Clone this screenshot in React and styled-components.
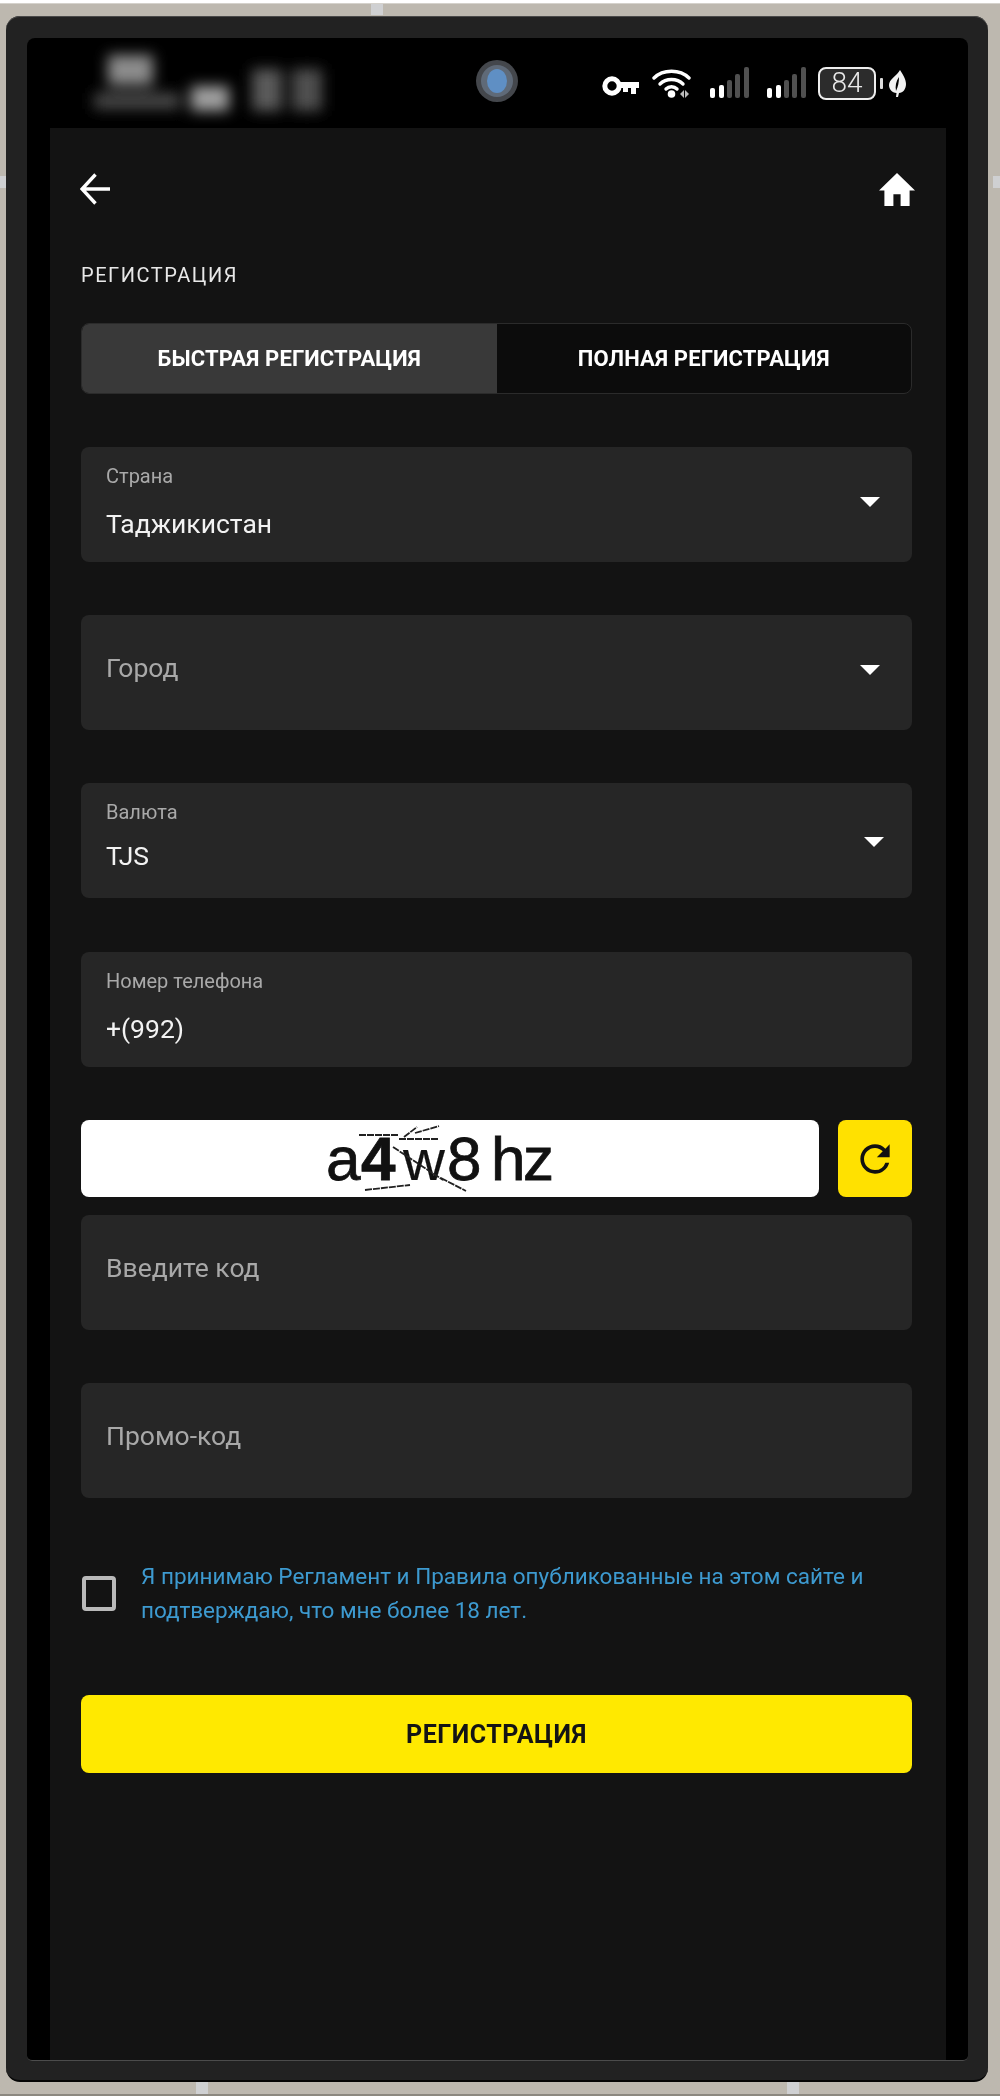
import React from "react";
import styled, { createGlobalStyle } from "styled-components";

const Global = createGlobalStyle`
  html, body { margin: 0; padding: 0; background: #fff; }
  * { box-sizing: border-box; }
  #root { width: 1000px; height: 2100px; }
`;

const Page = styled.div`
  width: 1000px; height: 2100px; padding: 3px 0 4px 0; display: flex;
  font-family: Roboto, "Liberation Sans", sans-serif; background: #fff;
`;
const Shell = styled.div`
  position: relative; flex: 1; display: flex; padding: 12px 12px 12px 6px;
  background: #bdb8af; border-top: 1px solid #d5d2cc; border-bottom: 2px solid #8c8880;
`;
const Band = styled.span`
  position: absolute; background: #cfd0d2;
  ${p => p.$x != null ? `left:${p.$x}px; width:12px; height:${p.$h}px;` : `top:${p.$y}px; height:12px; width:7px;`}
  ${p => p.$side === "top" ? "top:0;" : ""}
  ${p => p.$side === "bottom" ? "bottom:0;" : ""}
  ${p => p.$side === "right" ? "right:0;" : ""}
  ${p => p.$side === "left" ? "left:0;" : ""}
`;
const Bezel = styled.div`
  flex: 1; display: flex; padding: 22px 20px 19px 21px;
  background: #222; border-radius: 14px; border-bottom: 2px solid #050505;
  box-shadow: inset 0 1px 0 #4a4a4a; filter: blur(0.45px);
`;
const Screen = styled.div`
  flex: 1; display: flex; flex-direction: column; padding: 0 22px 0 23px;
  background: #000; border-radius: 8px 8px 5px 5px; border-bottom: 1px solid #4c4c4c;
`;
const StatusBar = styled.div`
  height: 90px; flex: none; display: flex; align-items: flex-start; position: relative;
`;
const Smudge = styled.svg`
  width: 300px; height: 90px; margin-left: 30px; flex: none;
`;
const Camera = styled.svg`
  width: 44px; height: 44px; margin: 21px 0 0 95px; flex: none;
`;
const StatusIcons = styled.div`
  display: flex; align-items: center; height: 40px; margin: 25px 0 0 83px;
`;
const Key = styled.svg` width: 37px; height: 20px; margin-top: 6px; `;
const Wifi = styled.svg` width: 39px; height: 32px; margin-left: 13px; `;
const Signal = styled.svg` width: 39px; height: 32px; margin-left: ${p => p.$ml}px; `;
const Battery = styled.div`
  width: 58px; height: 33px; margin-left: 12px; border: 2.5px solid #eee; border-radius: 8px;
  background: #2c2c2c; color: #e8e8e8; font-size: 28px; font-weight: 300;
  display: flex; align-items: center; justify-content: center; line-height: 1;
`;
const Nub = styled.span` width: 3px; height: 11px; margin-left: 4px; background: #ddd; border-radius: 1px; `;
const Leaf = styled.svg` width: 17px; height: 27px; margin-left: 6px; `;

const Content = styled.main`
  flex: 1; background: #131313; padding: 44px 34px 0 31px; display: flex; flex-direction: column;
  color: #fff;
`;
const TopNav = styled.nav`
  display: flex; justify-content: space-between; align-items: center; height: 34px; margin: 0 -3px 0 -1px;
`;
const Title = styled.h1`
  margin: 55px 0 0; font-size: 20px; line-height: 28px; font-weight: 400; letter-spacing: 1.55px; color: #e8e8e8;
`;
const Tabs = styled.div`
  display: flex; height: 71px; margin-top: 34px; border: 1px solid #2b2b2b; border-radius: 8px; overflow: hidden;
  background: #0c0c0c;
`;
const Tab = styled.button`
  flex: 1; border: 0; padding: 0; color: #fff; font: 700 22px/1 Roboto, sans-serif; letter-spacing: 0.15px;
  background: ${p => (p.$active ? "#393939" : "transparent")};
`;
const Field = styled.div`
  position: relative; height: 115px; margin-top: ${p => p.$mt}px; background: #262626; border-radius: 8px;
  padding: 0 60px 0 25px; display: flex; flex-direction: column; justify-content: ${p => (p.$label ? "flex-start" : "center")};
`;
const Label = styled.span`
  margin-top: 17px; font-size: 20px; line-height: 24px; color: #a9a9a9;
`;
const Value = styled.span`
  margin-top: ${p => p.$mt}px; font-size: 26.5px; line-height: 32px; color: #f2f2f2;
`;
const Placeholder = styled.span`
  font-size: 26.5px; line-height: 32px; color: #a8a8a8; margin-top: -9px;
`;
const Chevron = styled.i`
  position: absolute; top: ${p => p.$top}px; right: ${p => p.$right}px; width: 0; height: 0;
  border-left: 10px solid transparent; border-right: 10px solid transparent; border-top: 10px solid #fff;
`;
const CaptchaRow = styled.div`
  display: flex; gap: 19px; height: 77px; margin-top: 53px;
`;
const CaptchaBox = styled.div`
  flex: 1; background: #fff; border-radius: 8px; display: flex; align-items: center; justify-content: center;
`;
const Refresh = styled.button`
  width: 74px; flex: none; border: 0; padding: 0; border-radius: 8px; background: #ffe100;
  display: flex; align-items: center; justify-content: center;
`;
const Agree = styled.label`
  display: flex; align-items: center; gap: 25px; margin: 61px 0 0 1px;
`;
const Check = styled.span`
  width: 34px; height: 35px; flex: none; border: 4px solid #b9b9b9; border-radius: 4px;
`;
const AgreeText = styled.span`
  font-size: 22.5px; line-height: 34px; color: #3d9ad0;
`;
const Submit = styled.button`
  height: 78px; margin-top: 68px; border: 0; border-radius: 8px; background: #ffe900; color: #141414;
  font: 700 25px/1 Roboto, sans-serif; letter-spacing: 0.5px;
`;

export default function App() {
  return (
    <Page>
      <Global />
      <Shell>
        <Band $x={371} $h={11} $side="top" />
        <Band $x={196} $h={13} $side="bottom" />
        <Band $x={787} $h={13} $side="bottom" />
        <Band $y={172} $side="right" />
        <Band $y={172} $side="left" />
        <Bezel>
          <Screen>
            <StatusBar>
              <Smudge viewBox="0 0 300 90">
                <defs>
                  <filter id="b" x="-50%" y="-50%" width="200%" height="200%"><feGaussianBlur stdDeviation="7" /></filter>
                </defs>
                <g filter="url(#b)">
                  <rect x="28" y="17" width="45" height="30" fill="#8c8c8c" />
                  <rect x="14" y="55" width="86" height="16" fill="#484848" />
                  <rect x="111" y="48" width="38" height="25" fill="#a0a0a0" />
                  <rect x="172" y="31" width="30" height="42" fill="#5a5a5a" />
                  <rect x="212" y="31" width="30" height="42" fill="#505050" />
                </g>
              </Smudge>
              <Camera viewBox="0 0 44 44">
                <circle cx="22" cy="22" r="21" fill="#44474c" />
                <circle cx="22" cy="22" r="16" fill="#5f6a78" />
                <ellipse cx="22" cy="22" rx="10" ry="12" fill="#5f8fc4" />
              </Camera>
              <StatusIcons>
                <Key viewBox="0 0 37 20">
                  <circle cx="10" cy="10" r="7.2" fill="none" stroke="#fff" strokeWidth="5" />
                  <path d="M16 6h21v6h-3v6h-5v-6h-3v4h-5v-4h-5z" fill="#fff" />
                </Key>
                <Wifi viewBox="0 0 39 32">
                  <g fill="none" stroke="#fff" strokeWidth="3.4" strokeLinecap="round">
                    <path d="M2 11C11 2 28 2 37 11" />
                    <path d="M8 17c6-6 17-6 23 0" />
                    <path d="M14 22c3-3 8-3 11 0" />
                  </g>
                  <circle cx="19.5" cy="27" r="3.8" fill="#fff" />
                  <path d="M28 27l4-4v8zM33 23l4 4-4 4z" fill="#bbb" />
                </Wifi>
                <Signal viewBox="0 0 39 32" $ml={19}>
                  <rect x="0" y="21" width="5" height="10" rx="2" fill="#fff" />
                  <rect x="9" y="18" width="5" height="13" rx="2" fill="#fff" />
                  <rect x="17" y="13" width="5" height="18" rx="2" fill="#505050" />
                  <rect x="25" y="7" width="5" height="24" rx="2" fill="#505050" />
                  <rect x="34" y="0" width="5" height="31" rx="2" fill="#505050" />
                </Signal>
                <Signal viewBox="0 0 39 32" $ml={18}>
                  <rect x="0" y="21" width="5" height="10" rx="2" fill="#fff" />
                  <rect x="9" y="18" width="5" height="13" rx="2" fill="#fff" />
                  <rect x="17" y="13" width="5" height="18" rx="2" fill="#505050" />
                  <rect x="25" y="7" width="5" height="24" rx="2" fill="#505050" />
                  <rect x="34" y="0" width="5" height="31" rx="2" fill="#505050" />
                </Signal>
                <Battery>84</Battery>
                <Nub />
                <Leaf viewBox="0 0 17 27">
                  <path d="M11 0c3 5 6 9 6 14 0 5-3 9-7 9l-1 4H7l.5-4C3 23 0 19 0 15 0 9 8 6 11 0zM10 7c-3 4-4 9-3 14 2-4 3-9 3-14z" fillRule="evenodd" fill="#f2f2f2" />
                </Leaf>
              </StatusIcons>
            </StatusBar>
            <Content>
              <TopNav>
                <svg width="30" height="32" viewBox="0 0 30 32" fill="none" stroke="#fff" strokeWidth="3.4">
                  <path d="M30 16H3M15.5 1.5L2 16l13.5 14.5" />
                </svg>
                <svg width="36" height="33" viewBox="2 3 20 17" preserveAspectRatio="none" fill="#fff">
                  <path d="M10 20v-6h4v6h5v-8h3L12 3 2 12h3v8z" />
                </svg>
              </TopNav>
              <Title>РЕГИСТРАЦИЯ</Title>
              <Tabs>
                <Tab $active>БЫСТРАЯ РЕГИСТРАЦИЯ</Tab>
                <Tab>ПОЛНАЯ РЕГИСТРАЦИЯ</Tab>
              </Tabs>
              <Field $label $mt={53}>
                <Label>Страна</Label>
                <Value $mt={20}>Таджикистан</Value>
                <Chevron $top={50} $right={32} />
              </Field>
              <Field $mt={53}>
                <Placeholder>Город</Placeholder>
                <Chevron $top={50} $right={32} />
              </Field>
              <Field $label $mt={53}>
                <Label>Валюта</Label>
                <Value $mt={16}>TJS</Value>
                <Chevron $top={54} $right={28} />
              </Field>
              <Field $label $mt={54}>
                <Label>Номер телефона</Label>
                <Value $mt={20}>+(992)</Value>
              </Field>
              <CaptchaRow>
                <CaptchaBox>
                  <svg width="250" height="77" viewBox="0 0 250 77">
                    <g fontFamily="'Liberation Sans', sans-serif" fill="#111" stroke="#111" strokeWidth="0.8" fontSize="62">
                      <text x="1" y="60">a</text>
                      <text x="36" y="60" fontWeight="700">4</text>
                      <text x="78" y="60" fontSize="58" strokeWidth="0.2">w</text>
                      <text x="122" y="60">8</text>
                      <text x="166" y="60">h</text>
                      <text x="198" y="60">z</text>
                    </g>
                    <g stroke="#222" strokeWidth="1.8" fill="none" strokeDasharray="7 1">
                      <path d="M34 15h40M74 19h39M79 17L92 7M90 13L114 6M116 58l25 13M40 70l45-5M68 27l50 33" />
                    </g>
                  </svg>
                </CaptchaBox>
                <Refresh>
                  <svg width="44" height="44" viewBox="0 0 24 24" fill="#111">
                    <path d="M17.65 6.35A7.958 7.958 0 0 0 12 4c-4.42 0-7.99 3.58-7.99 8s3.57 8 7.99 8c3.73 0 6.84-2.55 7.73-6h-2.08A5.99 5.99 0 0 1 12 18c-3.31 0-6-2.69-6-6s2.69-6 6-6c1.66 0 3.14.69 4.22 1.78L13 11h7V4l-2.35 2.35z" />
                  </svg>
                </Refresh>
              </CaptchaRow>
              <Field $mt={18}>
                <Placeholder>Введите код</Placeholder>
              </Field>
              <Field $mt={53}>
                <Placeholder>Промо-код</Placeholder>
              </Field>
              <Agree>
                <Check />
                <AgreeText>Я принимаю Регламент и Правила опубликованные на этом сайте и подтверждаю, что мне более 18 лет.</AgreeText>
              </Agree>
              <Submit>РЕГИСТРАЦИЯ</Submit>
            </Content>
          </Screen>
        </Bezel>
      </Shell>
    </Page>
  );
}
